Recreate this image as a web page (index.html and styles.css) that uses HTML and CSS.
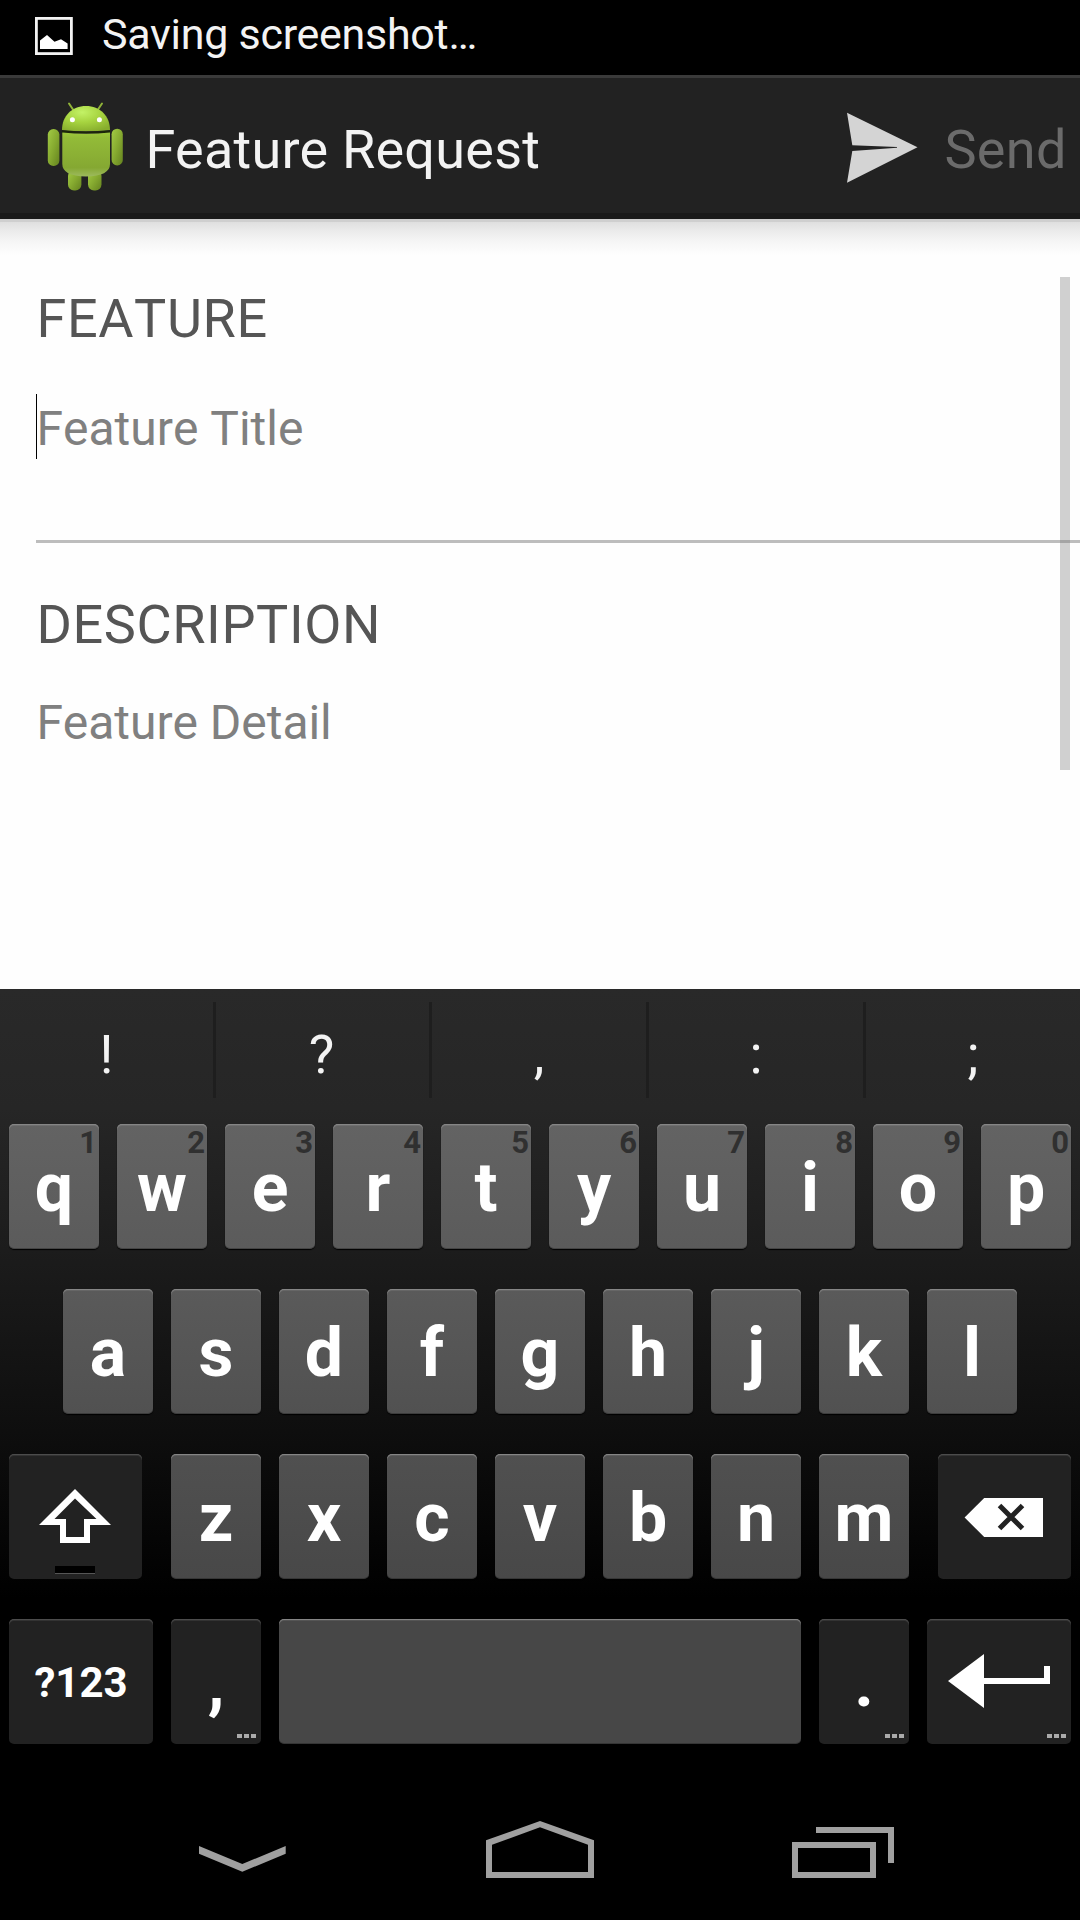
FILE: index.html
```html
<!DOCTYPE html>
<html lang="en">
<head>
<meta charset="utf-8">
<title>Feature Request</title>
<link rel="stylesheet" href="styles.css">
</head>
<body>
<div class="screen">
  <div class="status">
    <svg class="status-icon" width="38" height="38" viewBox="0 0 38 38">
      <rect x="1.4" y="1.4" width="35" height="35.2" fill="none" stroke="#f3f3f3" stroke-width="2.8"/>
      <path d="M5 32V23.500L12 18L19.500 24.800L26 22.300L32.600 26.500V32Z" fill="#fff"/>
    </svg>
    <span class="status-text">Saving screenshot…</span>
  </div>

  <header class="bar">
    <svg class="robot" width="90" height="100" viewBox="40 95 90 100">
      <defs>
        <radialGradient id="head" cx=".42" cy=".25" r=".8">
          <stop offset="0" stop-color="#c3f266"/><stop offset=".5" stop-color="#a6d33f"/><stop offset="1" stop-color="#87ad2d"/>
        </radialGradient>
        <linearGradient id="body" x1="0" y1="0" x2="0" y2="1">
          <stop offset="0" stop-color="#9dc93a"/><stop offset=".12" stop-color="#93bb38"/><stop offset=".8" stop-color="#85a832"/><stop offset="1" stop-color="#9dba5e"/>
        </linearGradient>
        <linearGradient id="limb" x1="0" y1="0" x2="1" y2="1">
          <stop offset="0" stop-color="#a3cc45"/><stop offset=".5" stop-color="#86aa30"/><stop offset="1" stop-color="#64821f"/>
        </linearGradient>
      </defs>
      <path d="M69 103.500L74 111M102 103.500L97 111" stroke="#8fb238" stroke-width="2" stroke-linecap="round"/>
      <path d="M62 130C62 116 72 106 86 106S110 116 110 130Q86 132.500 62 130Z" fill="url(#head)"/>
      <circle cx="72.400" cy="119.700" r="2.500" fill="#fff"/><circle cx="99.400" cy="119.700" r="2.500" fill="#fff"/>
      <rect x="68" y="170" width="13.400" height="20.500" rx="6" fill="url(#limb)"/>
      <rect x="88" y="170" width="13.500" height="20.500" rx="6" fill="url(#limb)"/>
      <path d="M62 130.500Q86 133 110 130.500V133H62Z" fill="#1c260a"/>
      <path d="M62.300 132.500Q86 135 110 132.500V164Q110 176 86 176.500Q62.300 176 62.300 164Z" fill="url(#body)"/>
      <rect x="47.800" y="129" width="11.600" height="37" rx="5.600" fill="url(#limb)"/>
      <rect x="111.600" y="128.700" width="11.200" height="36.700" rx="5.500" fill="url(#limb)"/>
    </svg>
    <h1 class="title">Feature Request</h1>
    <svg class="send-icon" width="72" height="72" viewBox="847 112 72 72">
      <path d="M847 112.700L917.500 147.300L847 182.800L852.300 151L897 147.800V147L852.300 145.300Z" fill="#d4d4d4"/>
    </svg>
    <span class="send">Send</span>
  </header>

  <main class="form">
    <h2 class="label">FEATURE</h2>
    <div class="field field-title">Feature Title<i class="cursor"></i></div>
    <h2 class="label label-desc">DESCRIPTION</h2>
    <div class="field field-detail">Feature Detail</div>
    <i class="scrollbar"></i>
  </main>

  <section class="keyboard">
    <div class="suggest"><span>!</span><span>?</span><span>,</span><span>:</span><span>;</span></div>
    <div class="row row1">
      <div class="key">q<b>1</b></div><div class="key">w<b>2</b></div><div class="key">e<b>3</b></div><div class="key">r<b>4</b></div><div class="key">t<b>5</b></div><div class="key">y<b>6</b></div><div class="key">u<b>7</b></div><div class="key">i<b>8</b></div><div class="key">o<b>9</b></div><div class="key">p<b>0</b></div>
    </div>
    <div class="row row2">
      <div class="key">a</div><div class="key">s</div><div class="key">d</div><div class="key">f</div><div class="key">g</div><div class="key">h</div><div class="key">j</div><div class="key">k</div><div class="key">l</div>
    </div>
    <div class="row row3">
      <div class="key dark side">
        <svg width="133" height="125" viewBox="9 1454 133 125">
          <path fill-rule="evenodd" fill="#fff" d="M75 1489L111 1525H90V1543H60V1525H39ZM75 1498.500L54.500 1519H66V1537H84V1519H96.500Z"/>
          <path d="M55 1566H95V1573H55Z" fill="#000"/><path d="M55 1573H95V1574H55Z" fill="#555"/>
        </svg>
      </div>
      <div class="letters">
        <div class="key">z</div><div class="key">x</div><div class="key">c</div><div class="key">v</div><div class="key">b</div><div class="key">n</div><div class="key">m</div>
      </div>
      <div class="key dark side">
        <svg width="133" height="125" viewBox="938 1454 133 125">
          <path d="M964.600 1517.500L984.200 1498H1043V1537H984.200Z" fill="#fff"/>
          <path d="M999.500 1505.500L1022.500 1528.500M1022.500 1505.500L999.500 1528.500" stroke="#222" stroke-width="5"/>
        </svg>
      </div>
    </div>
    <div class="row row4">
      <div class="key dark wide sym">?123</div>
      <div class="key dark">,<i class="more"></i></div>
      <div class="key space"></div>
      <div class="key dark">.<i class="more"></i></div>
      <div class="key dark wide">
        <svg width="144" height="125" viewBox="927 1619 144 125">
          <path d="M948 1681L984 1654V1678H1044V1666H1050V1684H984V1708Z" fill="#fff"/>
        </svg><i class="more"></i>
      </div>
    </div>
  </section>

  <nav class="nav">
    <svg width="90" height="60" viewBox="198 1820 90 60"><path d="M199 1846L242.300 1864L285.700 1846V1853.700L242.300 1871.800L199 1853.700Z" fill="#a0a0a0"/></svg>
    <svg width="108" height="60" viewBox="486 1820 108 60"><path fill-rule="evenodd" d="M540 1821L594 1840.300V1878H486V1840.300ZM540 1827.300L492 1844.800V1872H588V1844.800Z" fill="#a0a0a0"/></svg>
    <svg width="102" height="60" viewBox="792 1820 102 60"><path fill-rule="evenodd" d="M792 1842H876V1878H792ZM798 1848V1872H870V1848ZM816 1827H894V1863H888V1833H816Z" fill="#a0a0a0"/></svg>
  </nav>
</div>
</body>
</html>
```
FILE: styles.css
```css
* { box-sizing: border-box; }
body { margin: 0; background: #000; font-family: Roboto, sans-serif; }
h1, h2 { margin: 0; font-weight: 400; }
svg { display: block; flex: none; }

.screen {
  width: 1080px;
  height: 1920px;
  display: flex;
  flex-direction: column;
  overflow: hidden;
}

.status {
  height: 75px;
  padding: 0 35px;
  display: flex;
  gap: 29px;
  background: #000;
  color: #f3f3f3;
}
.status-icon { margin-top: 17px; }
.status-text {
  font-size: 43px;
  line-height: 69px;
  letter-spacing: -.28px;
  white-space: nowrap;
}

.bar {
  height: 144px;
  padding: 0 0 0 40px;
  display: flex;
  background: #222;
  border-top: 3px solid #3a3a3a;
  border-bottom: 6px solid #1a1a1a;
}
.robot { margin-top: 17px; }
.title {
  margin-left: 15.5px;
  font-size: 54px;
  line-height: 143px;
  letter-spacing: .24px;
  color: #f3f3f3;
  white-space: nowrap;
}
.send-icon { margin: 34px 0 0 auto; }
.send {
  width: 136px;
  padding-left: .5px;
  margin-left: 25px;
  font-size: 54px;
  line-height: 143px;
  letter-spacing: .3px;
  color: #6b6b6b;
}

.form {
  position: relative;
  height: 770px;
  padding-left: 36px;
  background: linear-gradient(#cfcfcf 0 3px, #dfdfdf 3px, #ebebeb 12px, #f5f5f5 22px, #fefefe 36px);
}
.label {
  padding: 71px 0 0 .5px;
  height: 163px;
  font-size: 54px;
  line-height: 57px;
  font-kerning: none;
  letter-spacing: .6px;
  color: #555;
}
.label-desc { height: 146px; padding-top: 53px; }
.field {
  position: relative;
  padding-left: .4px;
  font-size: 48px;
  font-kerning: none;
  color: #808080;
}
.field-title {
  height: 161px;
  line-height: 93px;
  border-bottom: 3px solid #bdbdbd;
}
.field-detail { line-height: 68px; letter-spacing: -.05px; }
.cursor {
  position: absolute;
  left: 0;
  top: 12px;
  width: 1px;
  height: 65px;
  background: #000;
}
.scrollbar {
  position: absolute;
  left: 1060px;
  top: 58px;
  width: 10px;
  height: 493px;
  background: rgba(120, 120, 120, .34);
}

.keyboard {
  height: 791px;
  background: linear-gradient(#292929, #262626 120px, #1c1c1c 261px, #0f0f0f 430px, #000 610px);
}
.suggest {
  height: 135px;
  padding: 13px 0 26px;
  display: grid;
  grid-template-columns: 213px 216px 217px 217px 217px;
}
.suggest span {
  text-align: center;
  font-size: 54px;
  line-height: 105px;
  height: 96px;
  color: #f3f3f3;
}
.suggest span + span { border-left: 3px solid #1e1e1e; }
.suggest span:nth-child(2) { padding-right: 2px; }

.row {
  height: 125px;
  margin-bottom: 40px;
  padding: 0 9px;
  display: flex;
  justify-content: space-between;
}
.row2 { padding: 0 63px; }
.letters { display: flex; gap: 18px; }
.key {
  position: relative;
  width: 90px;
  height: 125px;
  flex: none;
  border-radius: 5px;
  text-align: center;
  font-size: 68px;
  font-weight: 700;
  line-height: 128px;
  color: #fff;
  background: linear-gradient(#636363, #5b5b5b);
  box-shadow: inset 0 1px #858585, inset 0 2px rgba(255, 255, 255, .08), inset 0 -1px rgba(0, 0, 0, .25), 0 1px 1px #000;
}
.row2 .key { background: linear-gradient(#5a5a5a, #515151); }
.row3 .key { background: linear-gradient(#505050, #484848); }
.row4 .key { background: #474747; }
.row3 .dark, .row4 .dark {
  background: #222;
  box-shadow: inset 0 1px #4c4c4c, inset 0 2px rgba(255, 255, 255, .08);
}
.row .side { width: 133px; }
.row .wide { width: 144px; }
.row .space { width: 522px; }
.row .sym { font-size: 42px; }
.key b {
  position: absolute;
  right: 2px;
  top: 0;
  font-size: 31px;
  font-weight: 700;
  line-height: 37px;
  color: #303030;
}
.more {
  position: absolute;
  right: 5px;
  bottom: 6px;
  width: 19px;
  height: 4px;
  background: repeating-linear-gradient(90deg, #aaa 0 5px, transparent 5px 7px);
}

.nav {
  height: 140px;
  padding: 40px 186px 0 198px;
  display: flex;
  justify-content: space-between;
}
```
